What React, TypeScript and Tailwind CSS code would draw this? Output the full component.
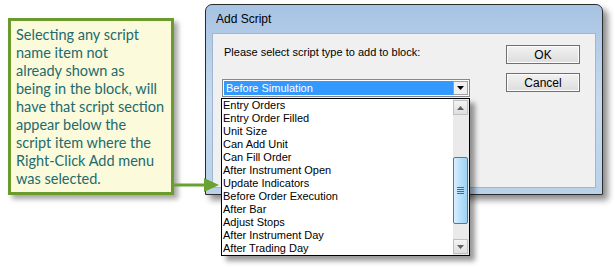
const items = [
  "Entry Orders",
  "Entry Order Filled",
  "Unit Size",
  "Can Add Unit",
  "Can Fill Order",
  "After Instrument Open",
  "Update Indicators",
  "Before Order Execution",
  "After Bar",
  "Adjust Stops",
  "After Instrument Day",
  "After Trading Day",
];

const calloutLines = [
  "Selecting any script",
  "name item not",
  "already shown as",
  "being in the block, will",
  "have that script section",
  "appear below the",
  "script item where the",
  "Right-Click Add menu",
  "was selected.",
];

const win = { fontFamily: '"Liberation Sans", Arial, sans-serif' };

function Callout() {
  return (
    <div className="ml-[8px] mt-[18px] h-[177px] w-[166px] shrink-0 border-[3px] border-[#6b9b2d] bg-[#fbfbdc] px-[5px] pt-[5px] shadow-[4px_4px_5px_rgba(0,0,0,0.35)]">
      <div
        className="text-[14.5px] leading-[18px] text-[#236a6c]"
        style={{ fontFamily: 'Lato, "Open Sans", sans-serif' }}
      >
        {calloutLines.map((l) => (
          <div key={l} className="whitespace-nowrap">
            {l}
          </div>
        ))}
      </div>
    </div>
  );
}

function Button({ label }: { label: string }) {
  return (
    <div className="flex h-[19px] w-[74px] items-center justify-center border border-[#707070] bg-gradient-to-b from-[#f2f2f2] to-[#dddddd] text-[12px] text-black shadow-[inset_0_0_0_1px_#fcfcfc]">
      {label}
    </div>
  );
}

function Dialog() {
  return (
    <div
      className="ml-[31px] mt-[4px] flex h-[191px] w-[398px] shrink-0 flex-col rounded-t-[7px] border border-[#2b2b2b] bg-gradient-to-b from-[#a7c3e3] via-[#c6dbef] to-[#b9d2ea] px-[6px] pb-[6px] shadow-[5px_5px_6px_rgba(0,0,0,0.45)]"
      style={win}
    >
      <div className="flex h-[28px] items-center pl-[4px] text-[12px] text-black">Add Script</div>
      <div className="flex flex-1 border border-[#9fb7d1] bg-[#f0f0f0]">
        <div className="flex flex-1 flex-col pl-[11px] pt-[12px]">
          <div className="text-[11px] leading-[13px] text-black">Please select script type to add to block:</div>
          <div className="ml-[-2px] mt-[20px] flex h-[18px] w-[248px] border border-[#828790] bg-white p-[1px]">
            <div className="flex flex-1 items-center bg-[#3399ff] pl-[2px] text-[11px] text-white">Before Simulation</div>
            <div className="flex w-[15px] items-center justify-center border border-[#a0a0a0] bg-[#f0f0f0]">
              <svg width="7" height="4" viewBox="0 0 7 4">
                <path d="M0 0h7L3.5 4z" fill="#000" />
              </svg>
            </div>
          </div>
        </div>
        <div className="flex flex-col gap-[9px] pr-[15px] pt-[11px]">
          <Button label="OK" />
          <Button label="Cancel" />
        </div>
      </div>
    </div>
  );
}

function ScrollArrow({ up }: { up?: boolean }) {
  return (
    <div className="flex h-[15px] items-center justify-center border border-[#c0c0c0] bg-gradient-to-b from-[#f4f4f4] to-[#dedede]">
      <svg width="7" height="4" viewBox="0 0 7 4">
        <path d={up ? "M0 4h7L3.5 0z" : "M0 0h7L3.5 4z"} fill="#606060" />
      </svg>
    </div>
  );
}

function DropList() {
  return (
    <div
      className="absolute left-[221px] top-[98px] flex h-[158px] w-[249px] border border-black bg-white shadow-[5px_5px_5px_rgba(0,0,0,0.4)]"
      style={win}
    >
      <div className="flex-1 pl-[1px]">
        {items.map((t) => (
          <div key={t} className="h-[13px] text-[11px] leading-[13px] text-black">
            {t}
          </div>
        ))}
      </div>
      <div className="flex w-[16px] flex-col bg-[#eaeaea] py-[1px] pr-[1px]">
        <ScrollArrow up />
        <div className="h-[42px]" />
        <div className="flex h-[67px] items-center justify-center rounded-[2px] border border-[#3c7fb1] bg-gradient-to-r from-[#d9efff] via-[#b7e0fb] to-[#9ed2f3]">
          <div className="flex w-[7px] flex-col gap-[1px]">
            <div className="h-px bg-[#3c6f9a]" />
            <div className="h-px bg-[#3c6f9a]" />
            <div className="h-px bg-[#3c6f9a]" />
            <div className="h-px bg-[#3c6f9a]" />
          </div>
        </div>
        <div className="flex-1" />
        <ScrollArrow />
      </div>
    </div>
  );
}

export default function App() {
  return (
    <div className="relative flex h-[267px] w-[615px] items-start overflow-hidden bg-white">
      <Callout />
      <Dialog />
      <DropList />
      <svg className="absolute left-[173px] top-[177px]" width="48" height="16" viewBox="0 0 48 16">
        <path d="M0 8h34" stroke="#69a232" strokeWidth="3" />
        <path d="M31 1l15 7-15 7z" fill="#69a232" />
      </svg>
    </div>
  );
}
